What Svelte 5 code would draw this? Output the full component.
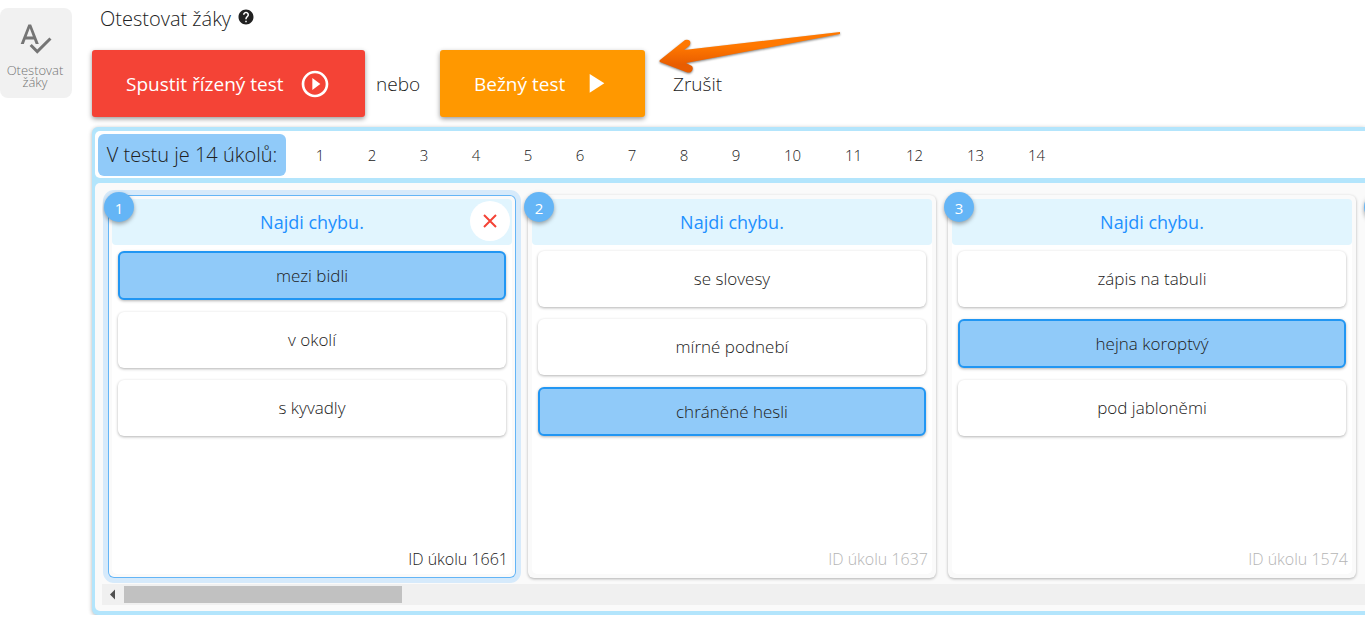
<script>
	let selectedTask = $state(1661);

	const tasks = [
		{ id: 1661, title: 'Najdi chybu.', options: ['mezi bidli', 'v okolí', 's kyvadly'], answer: 0 },
		{ id: 1637, title: 'Najdi chybu.', options: ['se slovesy', 'mírné podnebí', 'chráněné hesli'], answer: 2 },
		{ id: 1574, title: 'Najdi chybu.', options: ['zápis na tabuli', 'hejna koroptvý', 'pod jabloněmi'], answer: 1 }
	];

	const numbers = Array.from({ length: 14 }, (_, i) => i + 1);

	function selectNumber(n) {
		const task = tasks[n - 1];
		if (task) selectedTask = task.id;
	}
</script>

<div class="page">
	<nav>
		<button class="tool">
			<svg width="36" height="36" viewBox="0 0 24 24" aria-hidden="true">
				<path
					fill="currentColor"
					d="M12.45 16h2.09L9.43 3H7.57L2.46 16h2.09l1.12-3h5.64l1.14 3zm-6.02-5L8.5 5.48 10.57 11H6.43zm15.16.59l-8.09 8.09L9.83 16l-1.41 1.41 5.09 5.09L23 13l-1.41-1.41z"
				/>
			</svg>
			<span>Otestovat žáky</span>
		</button>
	</nav>

	<main>
		<h1>
			Otestovat žáky
			<svg width="18" height="18" viewBox="0 0 24 24" aria-hidden="true">
				<path
					fill="#212121"
					d="M12 2C6.48 2 2 6.48 2 12s4.48 10 10 10 10-4.48 10-10S17.52 2 12 2zm1 17h-2v-2h2v2zm2.07-7.75l-.9.92C13.45 12.9 13 13.5 13 15h-2v-.5c0-1.1.45-2.1 1.17-2.83l1.24-1.26c.37-.36.59-.86.59-1.41 0-1.1-.9-2-2-2s-2 .9-2 2H8c0-2.21 1.79-4 4-4s4 1.79 4 4c0 .88-.36 1.68-.93 2.25z"
				/>
			</svg>
		</h1>

		<div class="actions">
			<button class="start red">
				Spustit řízený test
				<svg width="32" height="32" viewBox="0 0 24 24" aria-hidden="true">
					<path
						fill="currentColor"
						d="M10 16.5l6-4.5-6-4.5v9zM12 2C6.48 2 2 6.48 2 12s4.48 10 10 10 10-4.48 10-10S17.52 2 12 2zm0 18c-4.41 0-8-3.59-8-8s3.59-8 8-8 8 3.59 8 8-3.59 8-8 8z"
					/>
				</svg>
			</button>
			<span class="or">nebo</span>
			<button class="start orange">
				Bežný test
				<svg width="32" height="32" viewBox="0 0 24 24" aria-hidden="true">
					<path fill="currentColor" d="M8 4.500v14l11-7z" />
				</svg>
			</button>
			<button class="cancel">Zrušit</button>
			<svg class="pointer" width="184" height="44" viewBox="0 0 184 44" aria-hidden="true">
				<defs>
					<linearGradient id="arrow" x1="0" y1="0" x2="0" y2="1">
						<stop offset="0.35" stop-color="#ff7800" />
						<stop offset="0.8" stop-color="#e95d00" />
					</linearGradient>
				</defs>
				<path
					fill="url(#arrow)"
					d="M1 28 L26 8 Q29 7 31 9 Q32 12 30 14 L25 18 L181 0 L181 2 L27 31 L33 34 Q35 37 32 40 Q30 41 27 40 L1 30 Q0 29 1 28z"
				/>
			</svg>
		</div>

		<section class="panel">
			<div class="summary">
				<strong>V testu je 14 úkolů:</strong>
				{#each numbers as n}
					<button class="number" class:wide={n > 9} onclick={() => selectNumber(n)}>{n}</button>
				{/each}
			</div>

			<div class="body">
				<div class="cards">
					{#each tasks as task, i}
						<article class="card" class:active={task.id === selectedTask}>
							<span class="badge">{i + 1}</span>
							<div class="content">
								<header>
									<h2>{task.title}</h2>
									{#if task.id === selectedTask}
										<button class="remove" aria-label="Odebrat úkol">
											<svg width="14" height="14" viewBox="0 0 14 14" aria-hidden="true">
												<path d="M1 1l12 12M13 1L1 13" stroke="#f44336" stroke-width="2" />
											</svg>
										</button>
									{/if}
								</header>
								<ul>
									{#each task.options as option, j}
										<li class:answer={j === task.answer}>{option}</li>
									{/each}
								</ul>
								<footer>ID úkolu {task.id}</footer>
							</div>
						</article>
					{/each}
					<!-- the next card stays empty until it is scrolled into view -->
					<article class="card" aria-hidden="true">
						<span class="badge"></span>
						<div class="content"></div>
					</article>
				</div>
				<div class="scrollbar">
					<svg width="22" height="21" viewBox="0 0 22 21" aria-hidden="true">
						<path fill="#505050" d="M8 10.500l5-5v10z" />
					</svg>
					<div class="thumb"></div>
				</div>
			</div>
		</section>
	</main>
</div>

<style>
	:global(body) {
		margin: 0;
		overflow: hidden;
		background: #fff;
	}

	.page {
		display: flex;
		gap: 20px;
		font-family: 'Open Sans', 'Noto Sans', sans-serif;
		font-weight: 300;
		color: #212121;
	}

	button {
		border: 0;
		background: none;
		font: inherit;
		color: inherit;
		cursor: pointer;
	}

	nav {
		flex: 0 0 72px;
		padding-top: 8px;
	}

	.tool {
		display: flex;
		flex-direction: column;
		align-items: center;
		gap: 8px;
		width: 72px;
		height: 90px;
		padding: 12px 2px 0 0;
		border-radius: 8px;
		background: #f1f1f1;
		color: #757575;
		font-size: 13px;
		line-height: 12px;
	}

	.tool span {
		width: 64px;
	}

	main {
		flex: 1;
		min-width: 0;
	}

	h1 {
		display: flex;
		gap: 6px;
		margin: 0;
		padding: 4px 8px 0;
		height: 46px;
		box-sizing: border-box;
		font-size: 20px;
		font-weight: 300;
		line-height: 30px;
	}

	h1 svg {
		margin-top: 4px;
	}

	.actions {
		position: relative;
		display: flex;
		align-items: center;
		margin-top: 4px;
		font-size: 19px;
	}

	.start {
		display: flex;
		align-items: center;
		justify-content: space-between;
		box-sizing: border-box;
		height: 67px;
		padding: 0 34px;
		border-radius: 3px;
		color: #fff;
		font-weight: 400;
		white-space: nowrap;
		box-shadow: 0 2px 5px rgba(0, 0, 0, 0.4);
	}

	.red {
		width: 273px;
		background: #f44336;
	}

	.orange {
		width: 205px;
		background: #ff9800;
	}

	.or {
		width: 75px;
		box-sizing: border-box;
		padding-left: 11px;
	}

	.cancel {
		padding: 0 28px;
	}

	.pointer {
		position: absolute;
		left: 567px;
		top: -18px;
		filter: drop-shadow(0 1px 1px rgba(0, 0, 0, 0.5));
	}

	.panel {
		margin-top: 10px;
		padding: 4px 0 4px 3px;
		border-radius: 6px 0 0 6px;
		background: #b3e5fc;
		box-shadow: 0 1px 4px rgba(0, 0, 0, 0.3);
	}

	.summary {
		display: flex;
		align-items: center;
		height: 47px;
		padding-left: 3px;
		border-radius: 5px 0 0 5px;
		background: #fff;
		font-size: 15px;
	}

	strong {
		width: 188px;
		margin-right: 8px;
		border-radius: 6px;
		background: #90caf9;
		font-size: 20px;
		font-weight: 300;
		line-height: 42px;
		text-align: center;
		white-space: nowrap;
	}

	.number {
		width: 52px;
		padding: 0;
		line-height: 36px;
	}

	.wide {
		width: 61px;
	}

	.body {
		margin-top: 5px;
		padding: 0 0 6px 7px;
		border-radius: 5px 0 0 5px;
		background: #fafafa;
	}

	.cards {
		display: flex;
		gap: 12px;
		padding: 12px 6px 6px;
		overflow: hidden;
	}

	.card {
		position: relative;
		flex: 0 0 408px;
		box-sizing: border-box;
		padding: 4px;
		border-radius: 6px;
		background: #fafafa;
		box-shadow: 0 1px 3px rgba(0, 0, 0, 0.3);
	}

	.active {
		box-shadow:
			inset 0 0 0 1px #64b5f6,
			0 0 0 5px #d6eafb;
	}

	.badge {
		position: absolute;
		left: -4px;
		top: -3px;
		width: 30px;
		height: 30px;
		border-radius: 50%;
		background: #64b5f6;
		color: #fff;
		font-size: 15px;
		font-weight: 400;
		line-height: 32px;
		text-align: center;
		box-shadow: 0 2px 4px rgba(0, 0, 0, 0.35);
	}

	.content {
		display: flex;
		flex-direction: column;
		min-height: 375px;
		border-radius: 5px;
		background: #fff;
	}

	header {
		display: flex;
		align-items: center;
		justify-content: center;
		height: 46px;
		border-radius: 4px;
		background: #e1f5fe;
	}

	h2 {
		flex: 1;
		margin: 0;
		color: #1e90ff;
		font-size: 18px;
		font-weight: 400;
		text-align: center;
	}

	.remove {
		display: flex;
		align-items: center;
		justify-content: center;
		width: 40px;
		height: 40px;
		margin: 0 2px 2px -42px;
		padding: 0;
		border-radius: 50%;
		background: #fff;
	}

	ul {
		display: flex;
		flex-direction: column;
		gap: 12px;
		margin: 0;
		padding: 6px;
		list-style: none;
	}

	li {
		border-radius: 6px;
		background: #fff;
		font-size: 17px;
		line-height: 56px;
		text-align: center;
		box-shadow: 0 1px 3px rgba(0, 0, 0, 0.3);
	}

	.answer {
		border: 2px solid #2196f3;
		background: #90caf9;
		line-height: 45px;
	}

	footer {
		margin-top: auto;
		padding: 0 4px 5px;
		color: #b5b5b5;
		font-size: 16px;
		line-height: 20px;
		text-align: right;
	}

	.active footer {
		color: #212121;
	}

	.scrollbar {
		display: flex;
		align-items: center;
		height: 21px;
		background: #f0f0f0;
	}

	.thumb {
		width: 278px;
		height: 17px;
		background: #c1c1c1;
	}
</style>
